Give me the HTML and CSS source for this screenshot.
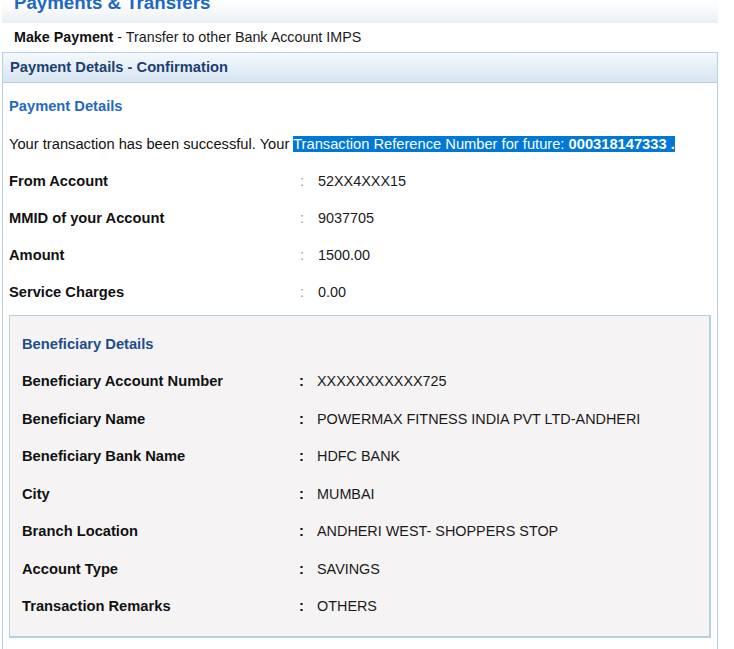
FILE: index.html
```html
<!DOCTYPE html>
<html>
<head>
<meta charset="utf-8">
<link rel="stylesheet" href="styles.css">
</head>
<body>
<div class="page">
  <div class="titlebar"><h1 class="title">Payments &amp; Transfers</h1></div>
  <div class="subtitle"><b>Make Payment</b> - Transfer to other Bank Account IMPS</div>
  <div class="panel">
    <div class="panel-head">Payment Details - Confirmation</div>
    <div class="panel-body">
      <h3 class="section">Payment Details</h3>
      <div class="message">Your transaction has been successful. Your <span class="sel">Transaction Reference Number for future: <b>000318147333 .</b></span></div>
      <div class="row"><span class="lbl">From Account</span><span class="colon">:</span><span class="val">52XX4XXX15</span></div>
      <div class="row"><span class="lbl">MMID of your Account</span><span class="colon">:</span><span class="val">9037705</span></div>
      <div class="row"><span class="lbl">Amount</span><span class="colon">:</span><span class="val">1500.00</span></div>
      <div class="row"><span class="lbl">Service Charges</span><span class="colon">:</span><span class="val">0.00</span></div>
      <div class="benef">
        <h3 class="bsection">Beneficiary Details</h3>
        <div class="brow"><span class="blbl">Beneficiary Account Number</span><span class="bcolon">:</span><span class="val">XXXXXXXXXXX725</span></div>
        <div class="brow"><span class="blbl">Beneficiary Name</span><span class="bcolon">:</span><span class="val">POWERMAX FITNESS INDIA PVT LTD-ANDHERI</span></div>
        <div class="brow"><span class="blbl">Beneficiary Bank Name</span><span class="bcolon">:</span><span class="val">HDFC BANK</span></div>
        <div class="brow"><span class="blbl">City</span><span class="bcolon">:</span><span class="val">MUMBAI</span></div>
        <div class="brow"><span class="blbl">Branch Location</span><span class="bcolon">:</span><span class="val">ANDHERI WEST- SHOPPERS STOP</span></div>
        <div class="brow"><span class="blbl">Account Type</span><span class="bcolon">:</span><span class="val">SAVINGS</span></div>
        <div class="brow"><span class="blbl">Transaction Remarks</span><span class="bcolon">:</span><span class="val">OTHERS</span></div>
      </div>
    </div>
  </div>
</div>
</body>
</html>
```

FILE: styles.css
```css
html, body {
  margin: 0;
  padding: 0;
  background: #ffffff;
}
body {
  font-family: "Liberation Sans", Arial, sans-serif;
  font-size: 14.7px;
  color: #111111;
  overflow: hidden;
  height: 649px;
}
.page {
  width: 734px;
}
.titlebar {
  margin-left: 2px;
  width: 716px;
  height: 23px;
  background: linear-gradient(to bottom, #ffffff 0%, #f6f8fa 50%, #eaeef3 100%);
  overflow: hidden;
}
.title {
  margin: -8px 0 0 12px;
  font-size: 18.7px;
  line-height: 22px;
  font-weight: bold;
  color: #2068c4;
}
.subtitle {
  height: 29px;
  line-height: 29px;
  padding-left: 14px;
  font-size: 14.3px;
  color: #1a1a1a;
}
.subtitle b {
  color: #111;
}
.panel {
  margin-left: 2px;
  width: 714px;
  border: 1px solid #b9cfe2;
  border-bottom: none;
  height: 596px;
  overflow: hidden;
}
.panel-head {
  height: 29px;
  line-height: 29px;
  padding-left: 7px;
  font-weight: bold;
  color: #1b3f72;
  background: linear-gradient(to bottom, #f3f8fc 0%, #e6eff7 50%, #d7e5f1 100%);
  border-bottom: 1px solid #b9cfe2;
}
.panel-body {
  padding: 4px 6px 0 6px;
}
.section {
  margin: 0;
  height: 38px;
  line-height: 38px;
  font-size: 14.7px;
  font-weight: bold;
  color: #1f6ac0;
}
.message {
  height: 38px;
  line-height: 38px;
  white-space: nowrap;
}
.sel {
  background: #0078d7;
  color: #ffffff;
}
.row {
  display: grid;
  grid-template-columns: 291px 18px 1fr;
  height: 37px;
  line-height: 37px;
}
.lbl {
  font-weight: bold;
}
.colon {
  color: #9a9a9a;
}
.benef {
  margin-top: 4px;
  border: 1px solid #b6cfe3;
  border-right-width: 2px;
  border-bottom-width: 2px;
  background: #f5f3f3;
  padding: 10px 0 10px 12px;
}
.bsection {
  margin: 0;
  height: 37px;
  line-height: 37px;
  font-size: 14.7px;
  font-weight: bold;
  color: #1c4e8c;
}
.brow {
  display: grid;
  grid-template-columns: 277px 18px 1fr;
  height: 37.5px;
  line-height: 37.5px;
}
.blbl {
  font-weight: bold;
}
.bcolon {
  font-weight: bold;
  color: #111;
}
.val {
  font-size: 14.4px;
  color: #1a1a1a;
}
```
